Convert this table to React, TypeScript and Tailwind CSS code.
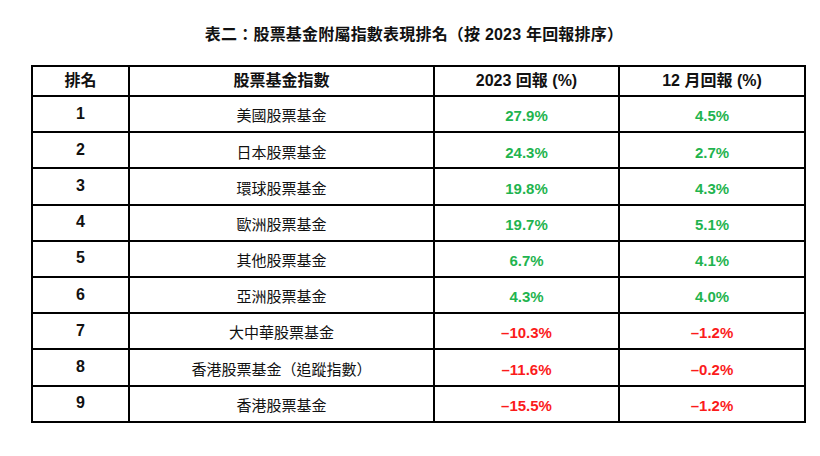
import React from "react";

type Row = { rank: number; name: string; ytd: string; dec: string };

const rows: Row[] = [
  { rank: 1, name: "美國股票基金", ytd: "27.9%", dec: "4.5%" },
  { rank: 2, name: "日本股票基金", ytd: "24.3%", dec: "2.7%" },
  { rank: 3, name: "環球股票基金", ytd: "19.8%", dec: "4.3%" },
  { rank: 4, name: "歐洲股票基金", ytd: "19.7%", dec: "5.1%" },
  { rank: 5, name: "其他股票基金", ytd: "6.7%", dec: "4.1%" },
  { rank: 6, name: "亞洲股票基金", ytd: "4.3%", dec: "4.0%" },
  { rank: 7, name: "大中華股票基金", ytd: "–10.3%", dec: "–1.2%" },
  { rank: 8, name: "香港股票基金（追蹤指數）", ytd: "–11.6%", dec: "–0.2%" },
  { rank: 9, name: "香港股票基金", ytd: "–15.5%", dec: "–1.2%" },
];

const tone = (v: string) => (v.startsWith("–") ? "text-[#fb1b1b]" : "text-[#1fb44f]");

const App = () => {
  return (
    <div
      className="w-[820px] h-[456px] bg-white text-[#111] pt-[25px]"
      style={{ fontFamily: '"Liberation Sans", "Noto Sans CJK TC", sans-serif' }}
    >
      <h1 className="text-center text-[16px] font-bold leading-[20px] pl-[8px] tracking-[0.2px]">
        表二：股票基金附屬指數表現排名（按 2023 年回報排序）
      </h1>
      <table className="mt-[20px] ml-[31px] w-[773px] border-collapse table-fixed">
        <colgroup>
          <col className="w-[97px]" />
          <col className="w-[305px]" />
          <col className="w-[185px]" />
          <col className="w-[186px]" />
        </colgroup>
        <thead>
          <tr className="h-[30px] text-[16px] font-bold">
            <th className="border-2 border-black">排名</th>
            <th className="border-2 border-black">股票基金指數</th>
            <th className="border-2 border-black">2023 回報 (%)</th>
            <th className="border-2 border-black">12 月回報 (%)</th>
          </tr>
        </thead>
        <tbody>
          {rows.map((r) => (
            <tr key={r.rank} className="h-[36.2px] text-center">
              <td className="border-2 border-black text-[16px] font-bold pb-[1px]">{r.rank}</td>
              <td className="border-2 border-black text-[15px] pt-[5px]">{r.name}</td>
              <td className={`border-2 border-black text-[15px] font-semibold pt-[5px] ${tone(r.ytd)}`}>
                {r.ytd}
              </td>
              <td className={`border-2 border-black text-[15px] font-semibold pt-[5px] ${tone(r.dec)}`}>
                {r.dec}
              </td>
            </tr>
          ))}
        </tbody>
      </table>
    </div>
  );
};

export default App;
